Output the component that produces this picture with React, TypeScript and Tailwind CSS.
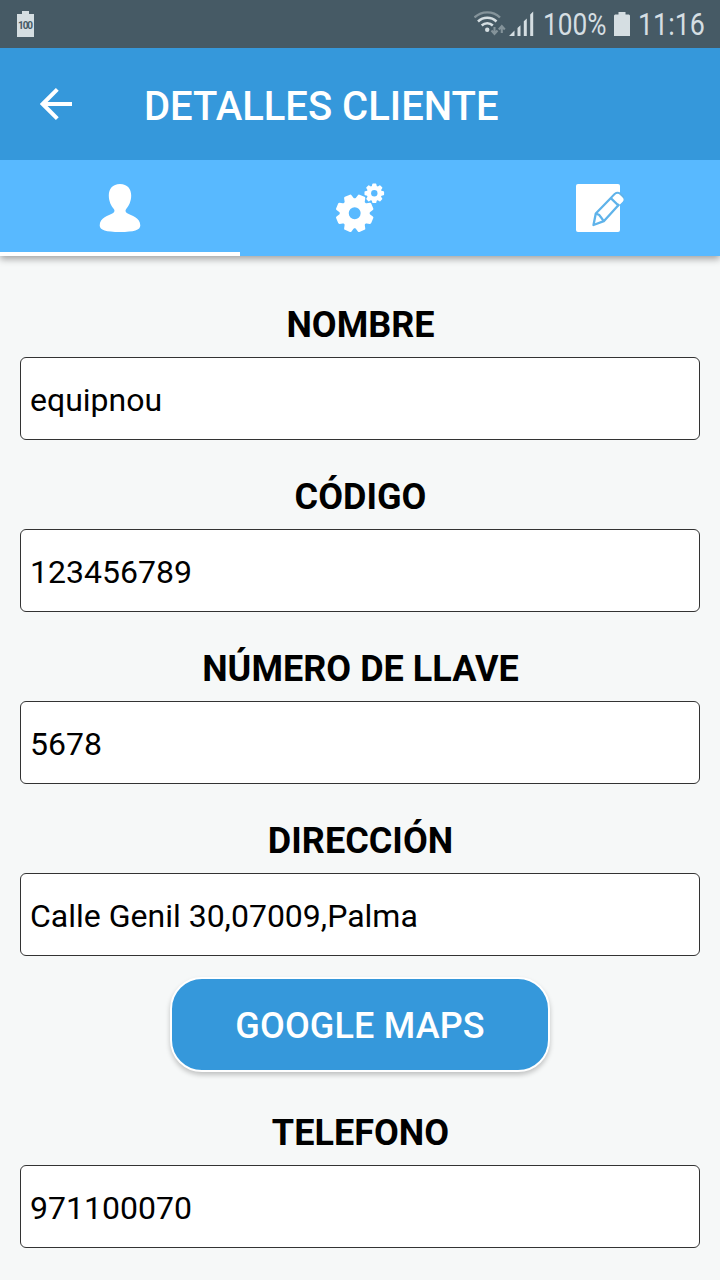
const fields = [
  { label: 'NOMBRE', value: 'equipnou' },
  { label: 'CÓDIGO', value: '123456789' },
  { label: 'NÚMERO DE LLAVE', value: '5678' },
  { label: 'DIRECCIÓN', value: 'Calle Genil 30,07009,Palma' },
];

function Field({ label, value }: { label: string; value: string }) {
  return (
    <label className="block">
      <span className="block h-[65px] pl-px text-center text-[36px] leading-[66px] font-bold tracking-[0.03px] text-black">
        {label}
      </span>
      <input
        readOnly
        value={value}
        className="block h-[83px] w-full rounded-[6px] border border-[#333] bg-white px-[9px] pt-[3px] text-[32px] text-black outline-none"
      />
    </label>
  );
}

function StatusBar() {
  return (
    <div className="flex h-12 items-center justify-between bg-[#465a65] text-[#d5dee2]">
      <svg width="17" height="28" viewBox="0 0 17 28" className="ml-[17px]">
        <path d="M0 4h5V1h7v3h5v23H0z" fill="currentColor" />
        <text x="8.5" y="19" textAnchor="middle" fontSize="10" fontWeight="700" textLength="15" fill="#465a65">
          100
        </text>
      </svg>
      <div className="flex h-12 items-center">
        {/* Wifi with transfer arrows */}
        <svg width="33" height="26" viewBox="0 0 33 26" className="mr-[2px]" fill="none">
          <path d="M.500 6.500C7.500-.3 19-.3 26 6.500" stroke="#84939a" strokeWidth="2.400" />
          <path d="M4 10.500c5.200-5 13.300-5 18.500 0M7.700 14.500c3.100-3 8-3 11.100 0" stroke="currentColor" strokeWidth="2.500" />
          <circle cx="13.200" cy="18.700" r="2.200" fill="currentColor" />
          <path d="M20.500 16v6.500M17.500 19.500l3 3.500 3-3.500M27.800 22v-6.500M24.800 18.500l3-3.500 3 3.500" stroke="#84939a" strokeWidth="2.100" />
        </svg>
        <svg width="25" height="26" viewBox="0 0 25 26" fill="currentColor">
          <path d="M0 25l5.500-5.500V25zM8.500 17l3-2.700V25h-3zM14.800 10.200l3-2.700V25h-3zM21.200 3.500l3-3V25h-3z" />
        </svg>
        <span className="ml-[9px] w-[64px] origin-left scale-x-[0.86] pt-[2px] text-[30.500px] whitespace-nowrap">100%</span>
        <svg width="16" height="26" viewBox="0 0 16 26" className="ml-[7px]" fill="currentColor">
          <path d="M1 3.500h3.500V1h7v2.500H15l1 1V25H0V4.500z" />
        </svg>
        <span className="ml-2 w-[82.500px] origin-left scale-x-[0.88] pt-[2px] text-[30.500px] whitespace-nowrap">11:16</span>
      </div>
    </div>
  );
}

const teeth = [0, 45, 90, 135, 180, 225, 270, 315];

function GearsIcon() {
  return (
    <svg width="50" height="50" viewBox="0 0 50 50" fill="white">
      <g transform="translate(19.700 30.300) rotate(22.500)">
        {teeth.map((angle) => (
          <path key={angle} d="M-5.500-12L-4-18q.3-1 1.300-1h5.400q1 0 1.300 1l1.500 6z" transform={`rotate(${angle})`} />
        ))}
        <circle r="15" />
        <circle r="6" fill="#58b9ff" />
      </g>
      <g transform="translate(39.300 10.300)">
        {teeth.map((angle) => (
          <path key={angle} d="M-2.700-6L-2-9.200q.1-.6.700-.6h2.600q.6 0 .7.600L2.700-6z" transform={`rotate(${angle})`} />
        ))}
        <circle r="7.600" />
        <circle r="3.200" fill="#58b9ff" />
      </g>
    </svg>
  );
}

function UserIcon() {
  return (
    <svg width="42" height="50" viewBox="0 0 42 50" fill="white">
      <path d="M21 1C13.500 1 9.800 6 9.800 12.500c0 6 2.500 10.500 5 13.500 1 1.300 1 3-.6 3.900C9.500 32.500.7 34.500.7 42.500.7 47 7 49 21 49s20.300-2 20.300-6.500c0-8-8.800-10-13.500-12.600-1.600-.9-1.600-2.600-.6-3.900 2.500-3 5-7.500 5-13.500C32.200 6 28.500 1 21 1z" />
    </svg>
  );
}

function EditIcon() {
  return (
    <svg width="48" height="50" viewBox="0 0 48 50">
      <rect x="0" y="1" width="44" height="48" rx="2" fill="white" />
      {/* Pencil: outline, eraser, then the tip and divider lines */}
      <path
        d="M17.500 42l2.300-11.500L39 10.800q2.600-2 5 .1l2.200 2.200q2.200 2.400 0 4.900L27.800 38.200z"
        fill="white"
        stroke="#5fb3ea"
        strokeWidth="2.300"
        strokeLinejoin="round"
      />
      <path d="M36.500 14.700l3-3q2.300-1.900 4.500.2l2.600 2.600q2 2.100.1 4.200l-3 3.100z" fill="white" />
      <path d="M19.800 30.500l3.400 1.500 2.300 3 2.300 3.200M34.800 15.100l8 7.800" fill="none" stroke="#5fb3ea" strokeWidth="2.200" />
    </svg>
  );
}

export default function App() {
  return (
    <div className="flex h-[1280px] w-[720px] flex-col overflow-hidden bg-[#f6f8f8] font-['Roboto',sans-serif]">
      <StatusBar />

      {/* Header */}
      <header className="relative z-20 flex h-28 items-center bg-[#3598db] text-white">
        <button aria-label="Volver" className="ml-10">
          <svg width="32" height="32" viewBox="0 0 32 32" fill="none" stroke="white" strokeWidth="4">
            <path d="M32 16H3M17.300 1.400L2.700 16l14.600 14.600" />
          </svg>
        </button>
        <h1 className="ml-[72px] pt-[6px] text-[40px] font-medium">DETALLES CLIENTE</h1>
      </header>

      {/* Tabs */}
      <nav className="z-10 grid h-24 shrink-0 grid-cols-3 bg-[#58b9ff] shadow-[0_3px_7px_rgba(0,0,0,0.35)]">
        <button className="flex items-center justify-center border-b-4 border-white pt-1">
          <UserIcon />
        </button>
        <button className="flex items-center justify-center">
          <GearsIcon />
        </button>
        <button className="flex items-center justify-center">
          <EditIcon />
        </button>
      </nav>

      {/* Client data */}
      <main className="px-5 pt-9">
        <div className="space-y-6">
          {fields.map((field) => (
            <Field key={field.label} label={field.label} value={field.value} />
          ))}
        </div>
        <button className="mx-auto mt-[21px] mb-7 flex h-[95px] w-[380px] items-center justify-center rounded-[32px] border-2 border-white bg-[#3598db] pt-[3px] text-[36px] font-medium tracking-[0.15px] text-white shadow-[0_3px_5px_rgba(0,0,0,0.22)]">
          GOOGLE MAPS
        </button>
        <Field label="TELEFONO" value="971100070" />
      </main>
    </div>
  );
}
